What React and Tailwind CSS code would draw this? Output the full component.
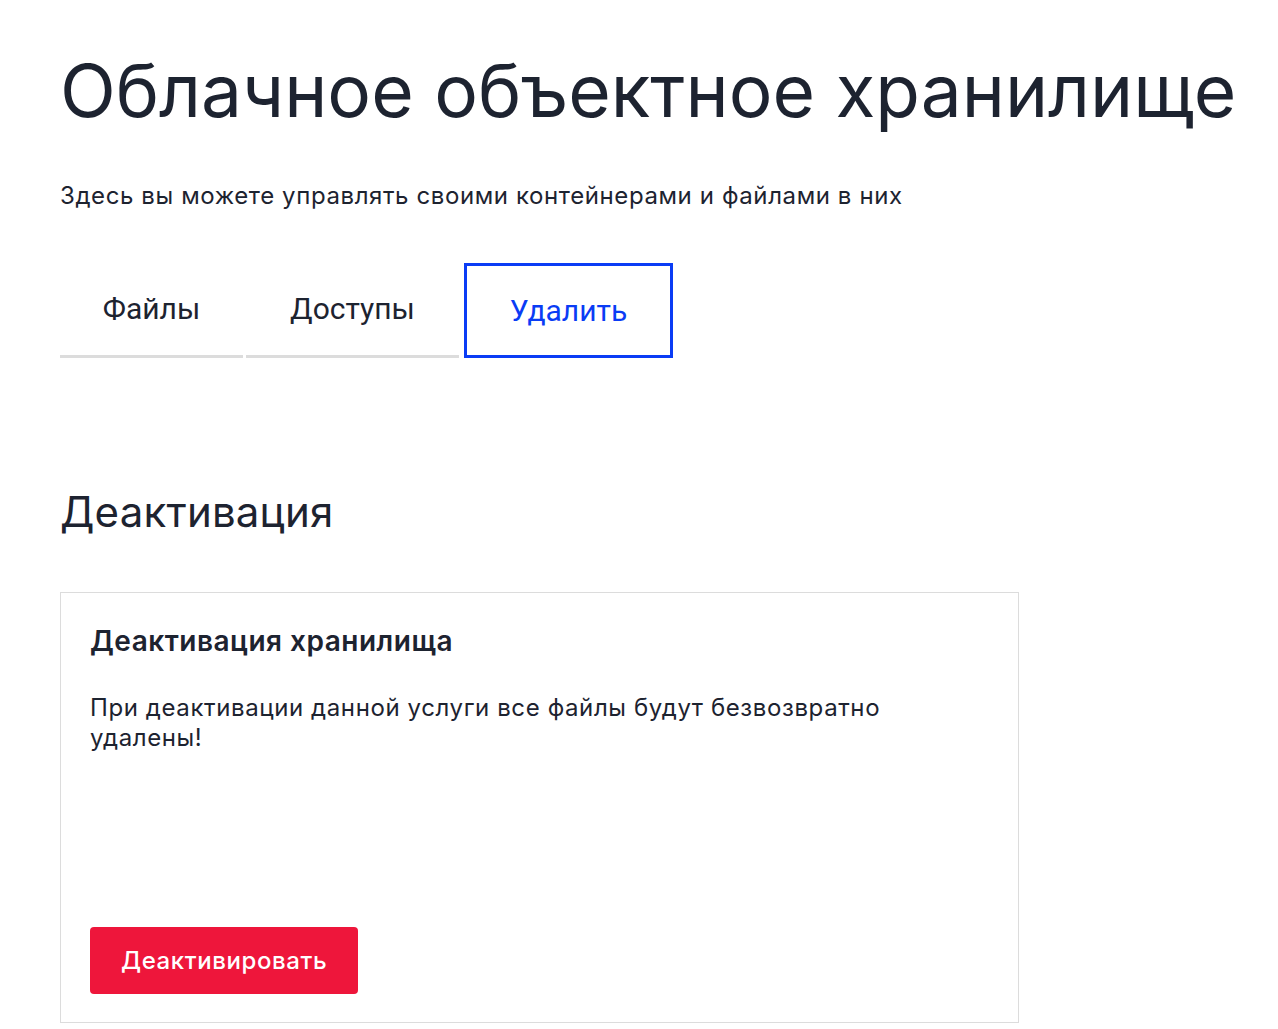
import React from "react";

export default function App() {
  const tabs = [
    { id: "files", label: "Файлы", width: "w-[183px]" },
    { id: "access", label: "Доступы", width: "w-[213px]" },
    { id: "delete", label: "Удалить", width: "w-[209px]" },
  ];
  const active = "delete";

  return (
    <div className="min-h-screen bg-white text-[#1d2330] font-['Inter',sans-serif] px-[60px] pt-[46px]">
      <h1 className="text-[73px] leading-[90px] font-normal whitespace-nowrap">
        Облачное объектное хранилище
      </h1>
      <p className="mt-[45px] text-[24px] leading-[30px] tracking-[0.6px]">
        Здесь вы можете управлять своими контейнерами и файлами в них
      </p>

      {/* Tabs */}
      <div className="mt-[52px] flex items-end gap-[3px]">
        {tabs.map((tab) =>
          tab.id === active ? (
            <button
              key={tab.id}
              className={`${tab.width} ml-[2px] h-[95px] border-[3px] border-[#0a3cf5] text-[#0a3cf5] text-[30px] font-['Roboto',sans-serif] flex items-center justify-center`}
            >
              {tab.label}
            </button>
          ) : (
            <button
              key={tab.id}
              className={`${tab.width} h-[94px] border-b-[3px] border-[#dcdcdc] text-[30px] font-['Roboto',sans-serif] flex items-center justify-center pb-[2px]`}
            >
              {tab.label}
            </button>
          )
        )}
      </div>

      <h2 className="mt-[128px] text-[42px] leading-[52px] font-normal tracking-[0.2px]">Деактивация</h2>

      {/* Card */}
      <div className="mt-[54px] w-[959px] h-[431px] border border-[#dcdcdc] px-[29px] pt-[30px] pb-[28px] flex flex-col">
        <h3 className="text-[28px] leading-[36px] font-semibold tracking-[0.5px]">Деактивация хранилища</h3>
        <p className="mt-[34px] text-[24px] leading-[30px] tracking-[0.6px] max-w-[820px]">
          При деактивации данной услуги все файлы будут безвозвратно удалены!
        </p>
        <div className="mt-auto">
          <button className="h-[67px] px-[31px] rounded-[4px] bg-[#ee163b] text-white text-[24px] font-medium tracking-[0.6px]">
            Деактивировать
          </button>
        </div>
      </div>
    </div>
  );
}
